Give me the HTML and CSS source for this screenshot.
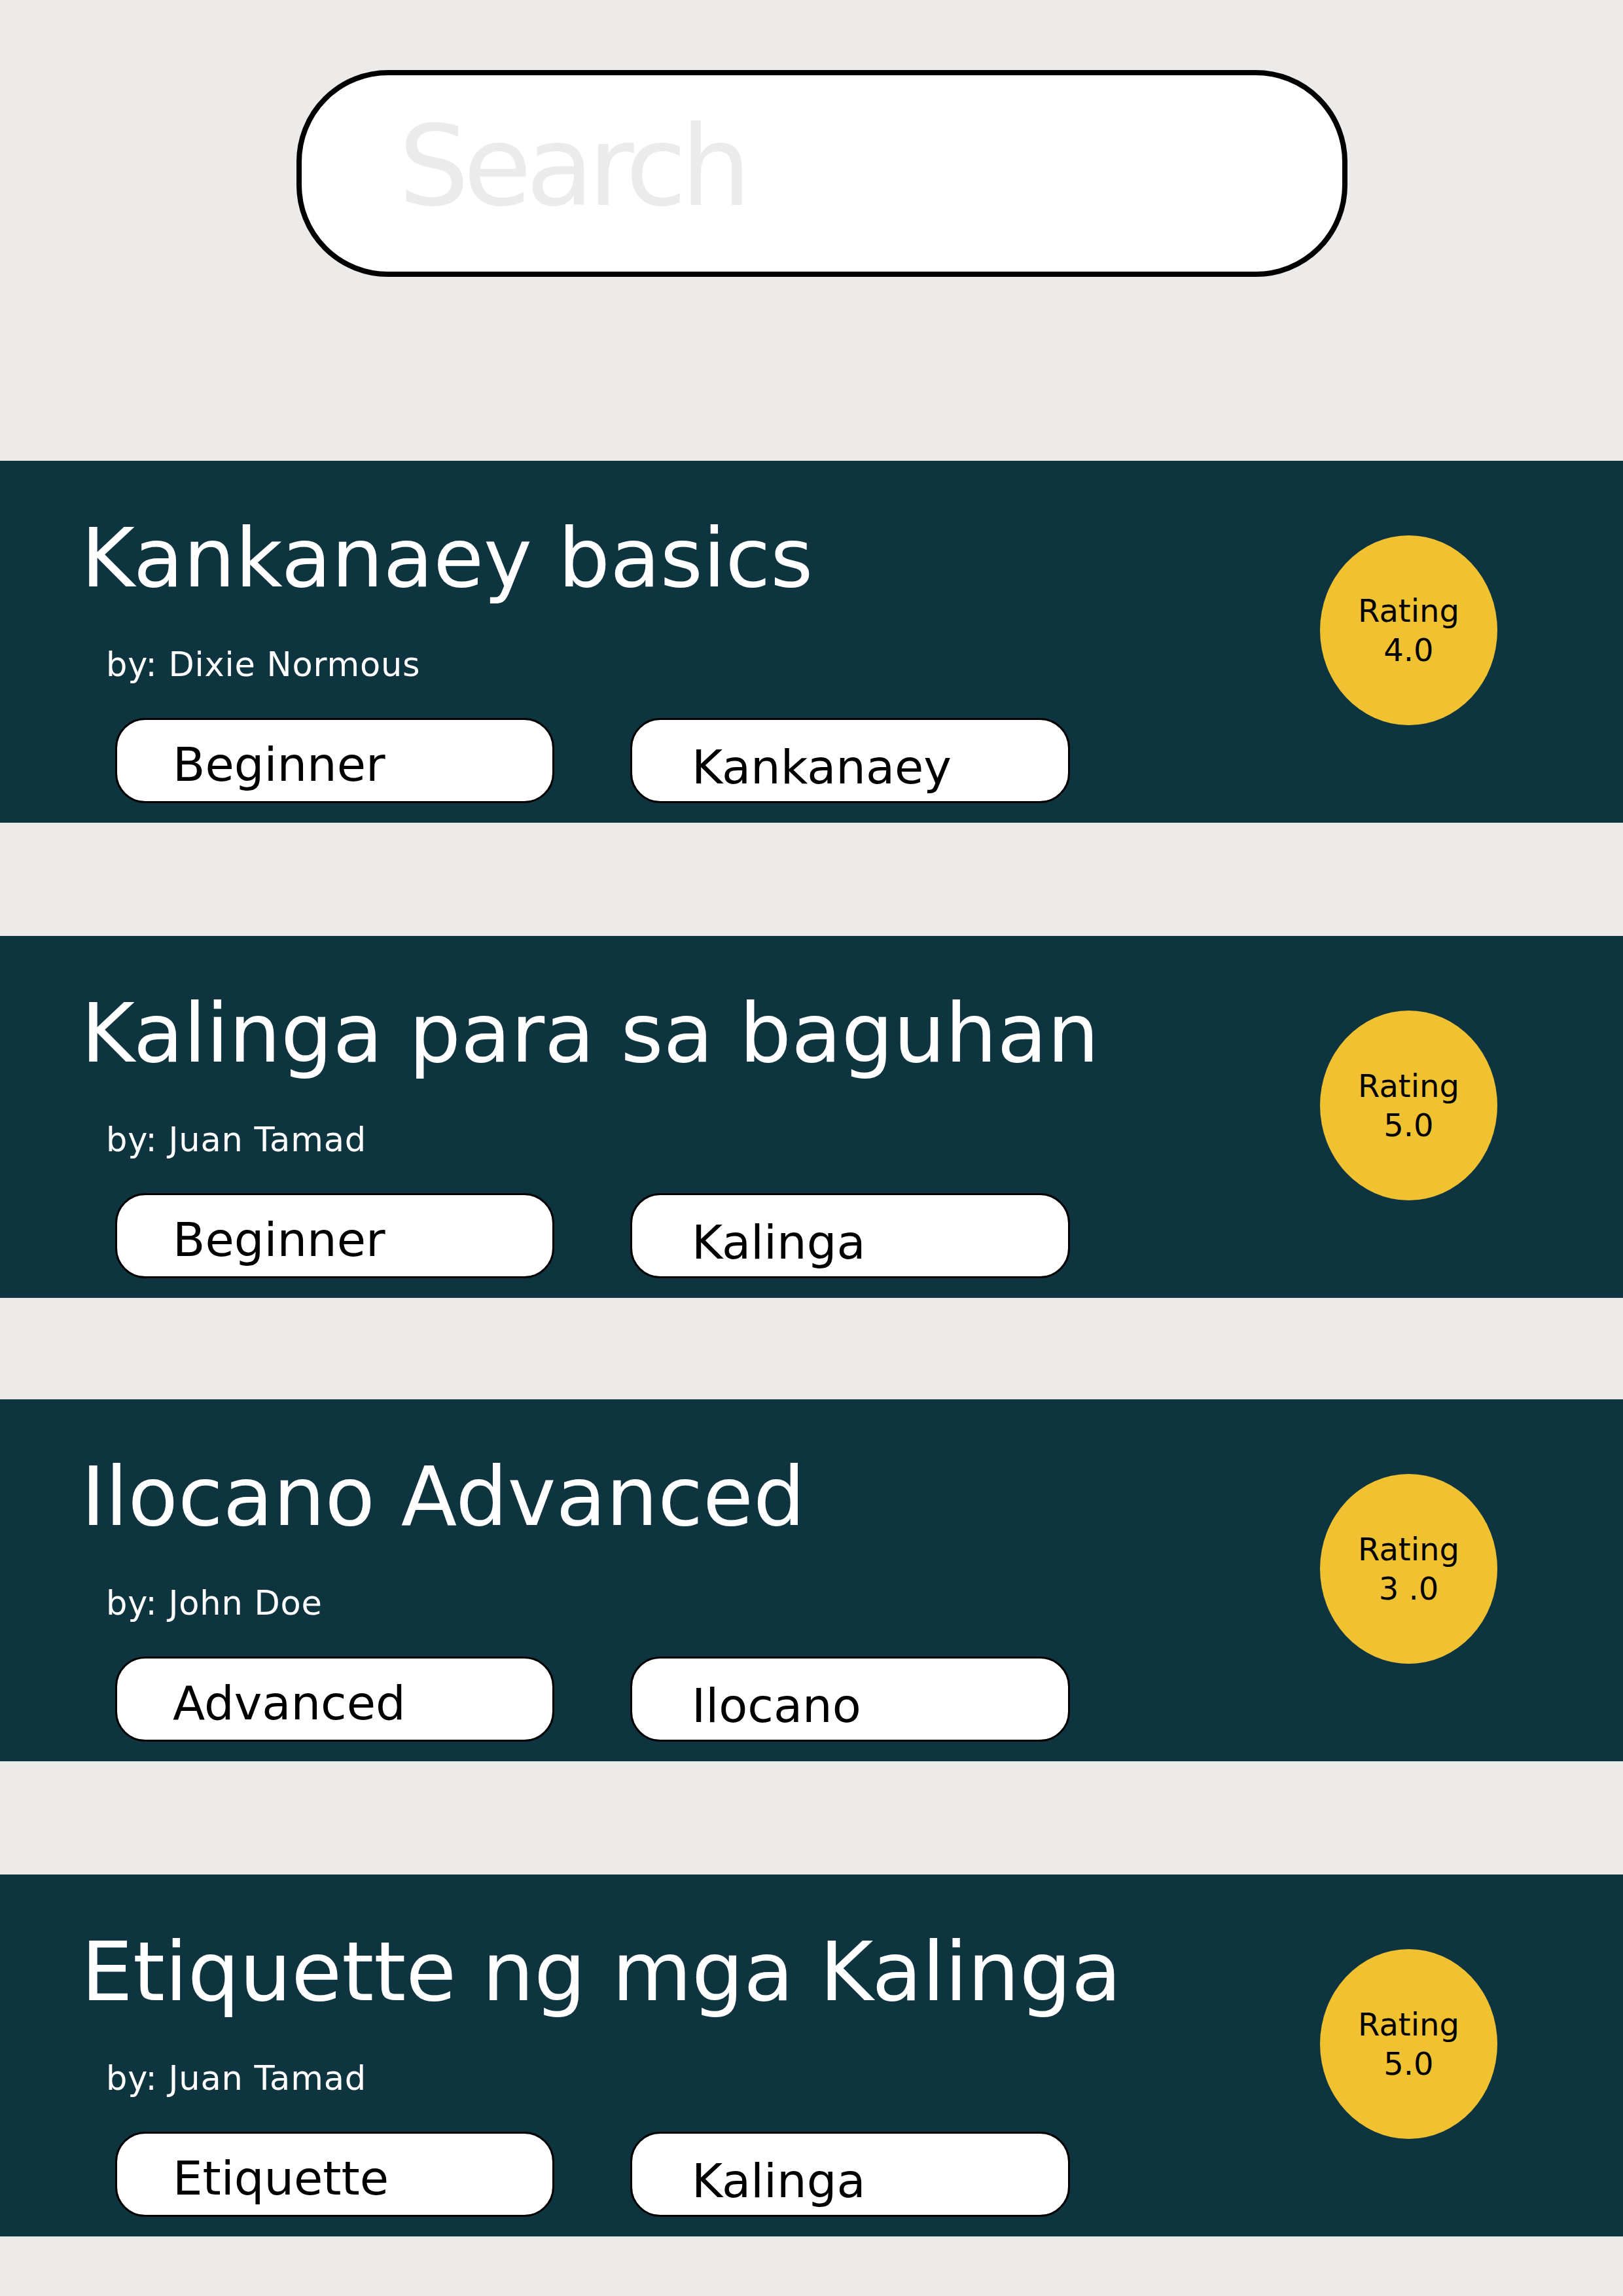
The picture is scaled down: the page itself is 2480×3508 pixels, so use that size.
FILE: index.html
```html
<!DOCTYPE html>
<html lang="en">
<head>
<meta charset="utf-8">
<title>Courses</title>
<link rel="stylesheet" href="styles.css">
</head>
<body>
<div class="page">
  <div class="search"><span class="search-text">Search</span></div>
  <div class="list">
    <section class="card">
      <div class="info">
        <h2 class="title">Kankanaey basics</h2>
        <p class="author">by: Dixie Normous</p>
        <div class="tags">
          <span class="tag">Beginner</span>
          <span class="tag tag-second">Kankanaey</span>
        </div>
      </div>
      <div class="rating">Rating<br>4.0</div>
    </section>
    <section class="card">
      <div class="info">
        <h2 class="title">Kalinga para sa baguhan</h2>
        <p class="author">by: Juan Tamad</p>
        <div class="tags">
          <span class="tag">Beginner</span>
          <span class="tag tag-second">Kalinga</span>
        </div>
      </div>
      <div class="rating">Rating<br>5.0</div>
    </section>
    <section class="card card-tight">
      <div class="info">
        <h2 class="title">Ilocano Advanced</h2>
        <p class="author">by: John Doe</p>
        <div class="tags">
          <span class="tag">Advanced</span>
          <span class="tag tag-second">Ilocano</span>
        </div>
      </div>
      <div class="rating">Rating<br>3 .0</div>
    </section>
    <section class="card">
      <div class="info">
        <h2 class="title">Etiquette ng mga Kalinga</h2>
        <p class="author">by: Juan Tamad</p>
        <div class="tags">
          <span class="tag">Etiquette</span>
          <span class="tag tag-second">Kalinga</span>
        </div>
      </div>
      <div class="rating">Rating<br>5.0</div>
    </section>
  </div>
</div>
</body>
</html>
```
FILE: styles.css
```css
html, body {
  margin: 0;
  padding: 0;
}
body {
  background: #ecebe9;
  font-family: "DejaVu Sans", Verdana, sans-serif;
}
.page {
  padding-top: 107px;
  padding-bottom: 91px;
}
.search {
  margin-left: 453px;
  width: 1606px;
  height: 316px;
  box-sizing: border-box;
  border: 8px solid #000;
  border-radius: 140px;
  background: #fff;
  display: flex;
  align-items: flex-start;
  padding: 54px 0 0 148px;
}
.search-text {
  font-size: 170px;
  line-height: 170px;
  color: #ebebeb;
  letter-spacing: -9px;
}
.list {
  margin-top: 281px;
  display: flex;
  flex-direction: column;
  gap: 173px;
}
.card-tight {
  margin-top: -18px;
}
.card {
  background: #0e3440;
  height: 553px;
  box-sizing: border-box;
  padding: 75px 192px 30px 124px;
  display: flex;
  justify-content: space-between;
  align-items: flex-start;
}
.info {
  display: flex;
  flex-direction: column;
}
.title {
  margin: 0;
  font-size: 125px;
  font-weight: normal;
  line-height: 147px;
  color: #fff;
  white-space: nowrap;
}
.author {
  margin: 61px 0 0 38px;
  font-size: 51px;
  letter-spacing: 0.8px;
  line-height: 58px;
  color: #fff;
}
.tags {
  margin: 52px 0 0 52px;
  display: flex;
  gap: 116px;
}
.tag {
  width: 671px;
  height: 130px;
  box-sizing: border-box;
  border: 3px solid #000;
  border-radius: 46px;
  background: #fff;
  color: #000;
  font-size: 72px;
  line-height: 84px;
  padding: 26px 0 0 85px;
}
.tag-second {
  width: 672px;
  padding: 30px 0 0 91px;
}
.rating {
  margin-top: 39px;
  width: 271px;
  height: 290px;
  border-radius: 50%;
  background: #f0c232;
  color: #000;
  font-size: 48px;
  line-height: 60px;
  text-align: center;
  display: flex;
  align-items: center;
  justify-content: center;
  flex-shrink: 0;
}
```
